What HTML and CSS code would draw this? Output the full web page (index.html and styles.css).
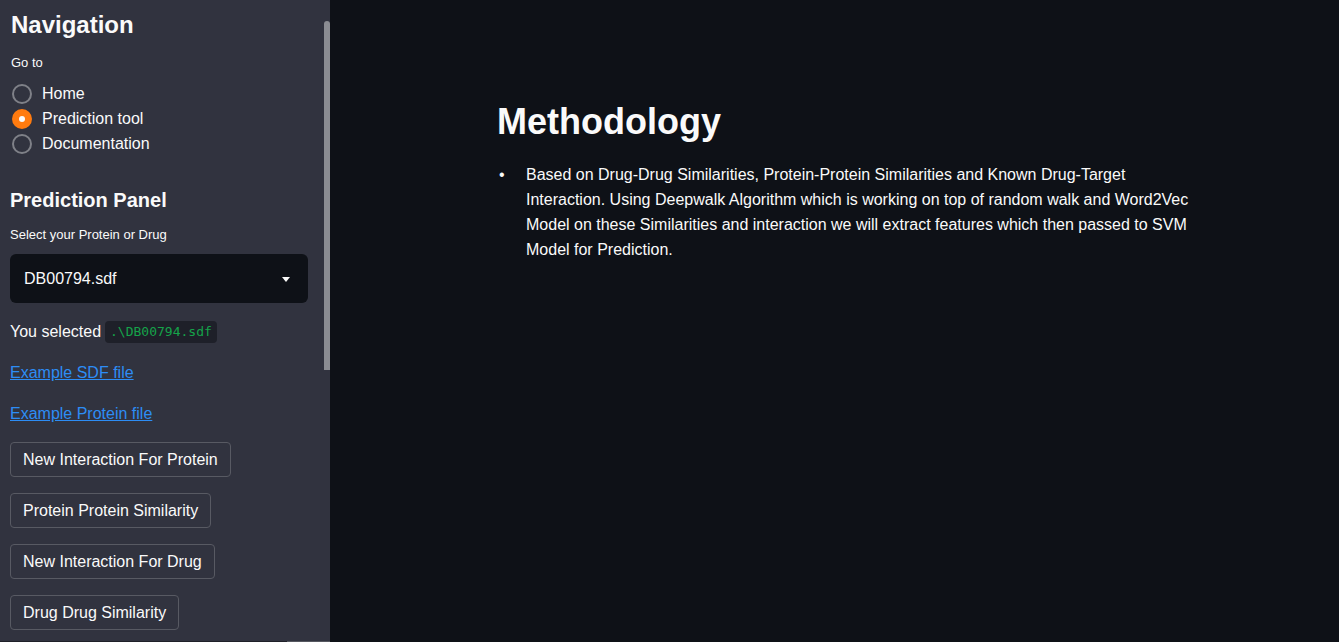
FILE: index.html
```html
<!DOCTYPE html>
<html lang="en">
<head>
<meta charset="utf-8">
<title>Methodology</title>
<link rel="stylesheet" href="styles.css">
</head>
<body>
<div class="app">
  <aside class="sidebar">
    <h2 class="nav-title">Navigation</h2>
    <div class="small-label goto">Go to</div>
    <div class="radios">
      <label class="radio"><span class="dot"></span><span>Home</span></label>
      <label class="radio checked"><span class="dot"></span><span>Prediction tool</span></label>
      <label class="radio"><span class="dot"></span><span>Documentation</span></label>
    </div>
    <h3 class="panel-title">Prediction Panel</h3>
    <div class="small-label select-label">Select your Protein or Drug</div>
    <div class="select">
      <span>DB00794.sdf</span>
      <svg class="caret" width="8" height="5" viewBox="0 0 8 5"><path d="M0 0h8L4 5z" fill="#fafafa"/></svg>
    </div>
    <div class="selected">You selected <code class="chip">.\DB00794.sdf</code></div>
    <a class="link link1" href="#">Example SDF file</a>
    <a class="link link2" href="#">Example Protein file</a>
    <div class="buttons">
      <button class="btn">New Interaction For Protein</button>
      <button class="btn">Protein Protein Similarity</button>
      <button class="btn">New Interaction For Drug</button>
      <button class="btn">Drug Drug Similarity</button>
    </div>
    <div class="vscroll"></div>
    <div class="hscroll"></div>
  </aside>
  <main class="main">
    <div class="content">
      <h1 class="title">Methodology</h1>
      <ul class="list">
        <li>Based on Drug-Drug Similarities, Protein-Protein Similarities and Known Drug-Target Interaction. Using Deepwalk Algorithm which is working on top of random walk and Word2Vec Model on these Similarities and interaction we will extract features which then passed to SVM Model for Prediction.</li>
      </ul>
    </div>
  </main>
</div>
</body>
</html>
```

FILE: styles.css
```css
* { box-sizing: border-box; }
html, body {
  margin: 0;
  padding: 0;
  height: 100%;
  overflow: hidden;
}
body {
  background: #0e1117;
  color: #fafafa;
  font-family: "Liberation Sans", Arial, sans-serif;
}
.app {
  display: flex;
  height: 642px;
}
.sidebar {
  position: relative;
  flex: 0 0 330px;
  background: #31333f;
  padding: 10px 0 0 10px;
  display: flex;
  flex-direction: column;
  align-items: flex-start;
  overflow: hidden;
}
.nav-title {
  margin: 0;
  font-size: 24px;
  line-height: 30px;
  font-weight: 700;
  padding-left: 1px;
}
.small-label {
  font-size: 13px;
  line-height: 16px;
}
.goto { margin-top: 15px; padding-left: 1px; }
.radios {
  margin-top: 10px;
  display: flex;
  flex-direction: column;
}
.radio {
  display: flex;
  align-items: center;
  height: 25px;
  font-size: 16px;
  padding-left: 2px;
}
.dot {
  width: 20px;
  height: 20px;
  border-radius: 50%;
  border: 2px solid #7f8188;
  margin-right: 10px;
  display: flex;
  align-items: center;
  justify-content: center;
}
.radio.checked .dot {
  background: #ff7b0f;
  border-color: #ff7b0f;
}
.radio.checked .dot::after {
  content: "";
  width: 6px;
  height: 6px;
  border-radius: 50%;
  background: #fafafa;
}
.panel-title {
  margin: 31px 0 0 0;
  font-size: 20px;
  line-height: 26px;
  font-weight: 700;
}
.select-label { margin-top: 14px; }
.select {
  margin-top: 11px;
  width: 298px;
  height: 49px;
  background: #0e1117;
  border-radius: 6px;
  display: flex;
  align-items: center;
  justify-content: space-between;
  padding: 0 18px 0 14px;
  font-size: 16px;
}
.caret { display: block; margin-top: 1px; }
.selected {
  margin-top: 18px;
  display: flex;
  align-items: center;
  gap: 4px;
  font-size: 16px;
  line-height: 22px;
}
.chip {
  background: #1e2029;
  color: #15a34a;
  font-family: "DejaVu Sans Mono", "Liberation Mono", monospace;
  font-size: 13px;
  line-height: 22px;
  padding: 0 5px;
  border-radius: 4px;
}
.link {
  color: #2d8df5;
  text-decoration: underline;
  font-size: 16px;
  line-height: 22px;
}
.link1 { margin-top: 19px; }
.link2 { margin-top: 19px; }
.buttons {
  margin-top: 17px;
  display: flex;
  flex-direction: column;
  align-items: flex-start;
  gap: 16px;
}
.btn {
  height: 35px;
  background: #31333f;
  color: #fafafa;
  border: 1px solid #585a63;
  border-radius: 4px;
  padding: 0 12px;
  font-family: "Liberation Sans", Arial, sans-serif;
  font-size: 16px;
  line-height: 20px;
}
.vscroll {
  position: absolute;
  left: 324px;
  top: 21px;
  width: 6px;
  height: 349px;
  background: #8a8c92;
  border-radius: 3px 3px 0 0;
}
.hscroll {
  position: absolute;
  left: 0;
  bottom: 0;
  width: 330px;
  height: 1px;
  background: #1f2028;
}
.hscroll::after {
  content: "";
  position: absolute;
  left: 287px;
  top: 0;
  width: 43px;
  height: 1px;
  background: #55575f;
}
.main {
  flex: 1;
  padding-left: 167px;
}
.content {
  width: 704px;
  padding-top: 100px;
}
.title {
  margin: 0;
  font-size: 36px;
  line-height: 44px;
  font-weight: 700;
}
.list {
  list-style: none;
  margin: 18px 0 0 0;
  padding: 0;
}
.list li {
  display: flex;
  font-size: 16px;
  line-height: 25px;
}
.list li::before {
  content: "\2022";
  flex: 0 0 27px;
  padding-left: 2px;
}
```
